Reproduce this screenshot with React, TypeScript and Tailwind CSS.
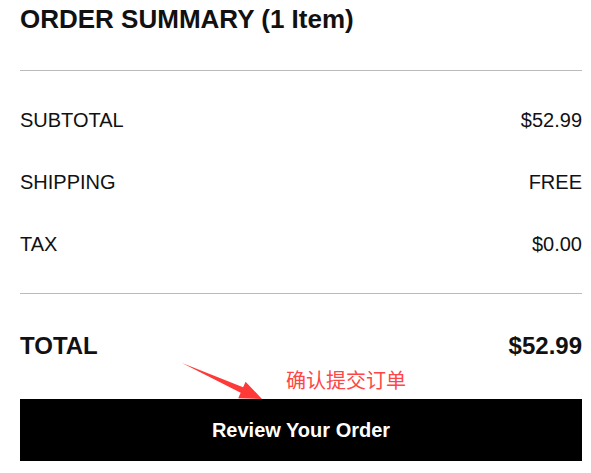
import React from 'react';

const rows = [
  { label: 'SUBTOTAL', value: '$52.99' },
  { label: 'SHIPPING', value: 'FREE' },
  { label: 'TAX', value: '$0.00' },
];

export default function App() {
  return (
    <div className="relative w-[591px] h-[473px] bg-white pl-5 pr-[9px] text-[#111] font-['Liberation_Sans',Arial,sans-serif]">
      <div className="pb-[32px] border-b border-[#bbbbbb]">
        <h1 className="text-[26px] leading-[38px] font-bold">ORDER SUMMARY (1 Item)</h1>
      </div>

      <div className="py-[18px] border-b border-[#bbbbbb]">
        {rows.map((r) => (
          <div key={r.label} className="flex h-[62px] items-center justify-between text-[20px]">
            <span>{r.label}</span>
            <span>{r.value}</span>
          </div>
        ))}
      </div>

      <div className="mt-[21px] flex h-[62px] items-center justify-between text-[24px] font-bold">
        <span>TOTAL</span>
        <span>$52.99</span>
      </div>

      <button className="mt-[22px] flex h-[62px] w-full items-center justify-center bg-black text-[20px] font-bold text-white">
        Review Your Order
      </button>

      {/* annotation overlay */}
      <span className="absolute left-[286px] top-[368px] text-[20px] leading-[24px] text-[#ff4545] font-['Noto_Sans_CJK_SC',sans-serif]">
        确认提交订单
      </span>
      <svg className="absolute left-[170px] top-[355px]" width="100" height="45" viewBox="0 0 100 45">
        <polygon
          points="12,8 73.1,32.3 75.6,26.8 92,44 68.2,43.2 70.7,37.7"
          fill="#ff3838"
        />
      </svg>
    </div>
  );
}
